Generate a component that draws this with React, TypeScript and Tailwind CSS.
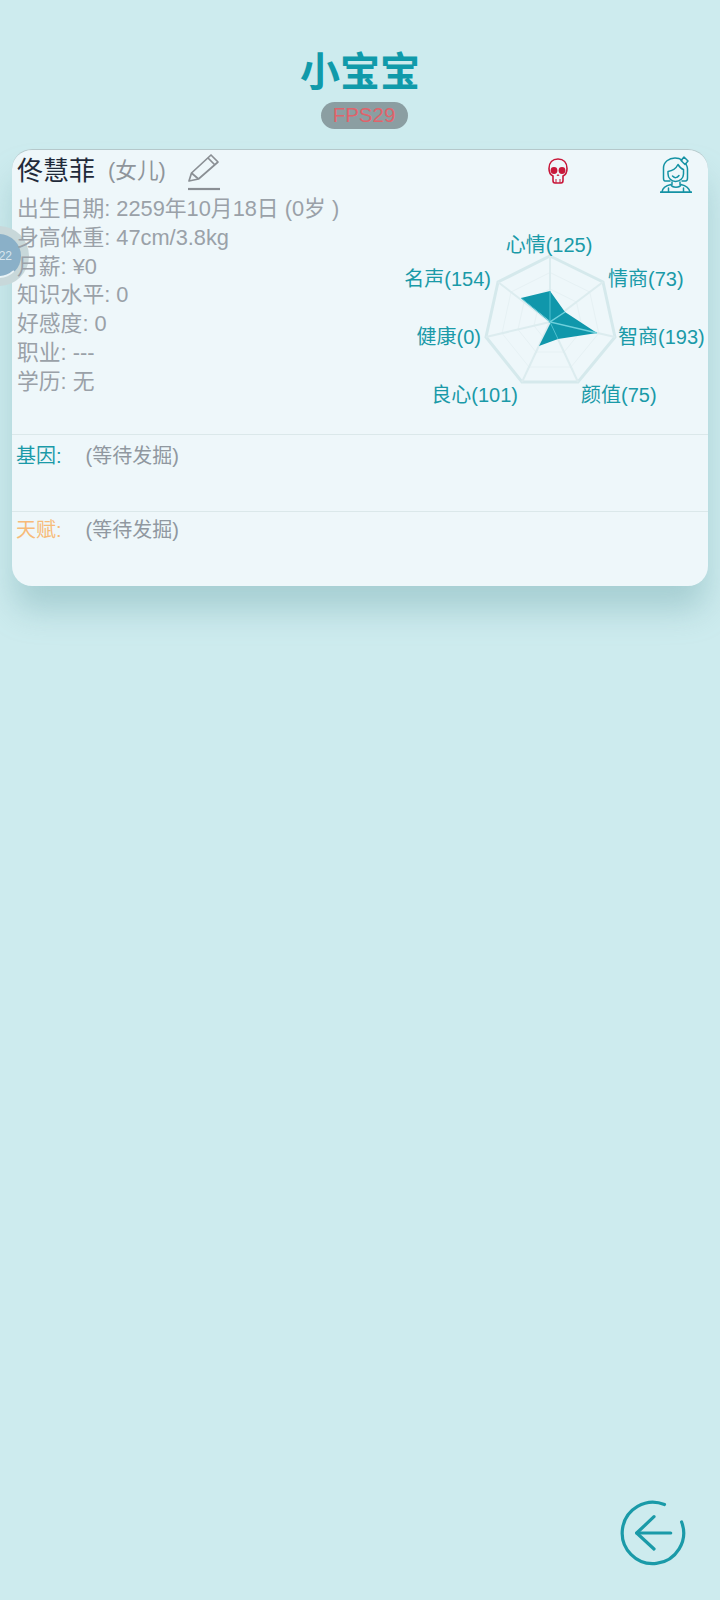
import React from "react";

const info = [
  "出生日期: 2259年10月18日 (0岁 )",
  "身高体重: 47cm/3.8kg",
  "月薪: ¥0",
  "知识水平: 0",
  "好感度: 0",
  "职业: ---",
  "学历: 无",
];

// radar center sits at 100,100 inside the svg box
const outer = [
  [100, 34],
  [153, 60],
  [165, 115],
  [128, 160],
  [72, 160],
  [36, 115],
  [48, 60],
];
const shape = "100,69 115,90 147,111 108,117 89,124 101,100 71,76";

const labels = [
  { t: "心情(125)", x: 99, y: 30, a: "middle" },
  { t: "情商(73)", x: 158, y: 64, a: "start" },
  { t: "智商(193)", x: 168, y: 122, a: "start" },
  { t: "颜值(75)", x: 131, y: 180, a: "start" },
  { t: "良心(101)", x: 68, y: 180, a: "end" },
  { t: "健康(0)", x: 31, y: 122, a: "end" },
  { t: "名声(154)", x: 41, y: 64, a: "end" },
];

function ring(scale: number) {
  return outer
    .map(([x, y]) => `${100 + (x - 100) * scale},${100 + (y - 100) * scale}`)
    .join(" ");
}

function Radar() {
  return (
    <svg width="320" height="200" viewBox="-62 0 320 200" className="block">
      <polygon points={ring(1)} fill="none" stroke="#d5e9ec" strokeWidth="3" />
      <polygon points={ring(0.75)} fill="none" stroke="#e6f1f4" strokeWidth="1" />
      <polygon points={ring(0.5)} fill="none" stroke="#e6f1f4" strokeWidth="1" />
      <polygon points={ring(0.25)} fill="none" stroke="#e6f1f4" strokeWidth="1" />
      {outer.map(([x, y], i) => (
        <line key={i} x1="100" y1="100" x2={x} y2={y} stroke="#dcecef" strokeWidth="2" />
      ))}
      <polygon points={shape} fill="#1097ab" />
      <polyline points="100,69 100,100" stroke="#4fc0cf" strokeWidth="1" />
      <polyline points="147,111 100,100 115,90" fill="none" stroke="#6fd0dc" strokeWidth="1.500" />
      <polyline points="108,117 100,100 71,76" fill="none" stroke="#4fc0cf" strokeWidth="1" />
      {labels.map((l) => (
        <text
          key={l.t}
          x={l.x}
          y={l.y}
          textAnchor={l.a as "start" | "middle" | "end"}
          fontSize="20"
          fill="#1a9aa8"
        >
          {l.t}
        </text>
      ))}
    </svg>
  );
}

function Pencil() {
  return (
    <svg width="34" height="38" viewBox="0 0 34 38" fill="none" stroke="#8a8f94" strokeWidth="1.700" strokeLinejoin="round">
      <path d="M2 28 L4.500 20 L24 2 L31 9 L11.500 26 Z" />
      <path d="M21 5 L28 12" />
      <path d="M4.500 20 L11.500 26" />
      <path d="M1 36 H33" strokeWidth="2.200" />
    </svg>
  );
}

function Skull() {
  return (
    <svg width="20" height="26" viewBox="0 0 20 26" fill="none" stroke="#c8183a" strokeWidth="1.600">
      <path d="M10 1 C4.500 1 1 4.500 1 10.500 C1 14.500 2.500 17 5 18 L5 22.500 Q5 25 7 25 H13 Q15 25 15 22.500 L15 18 C17.500 17 19 14.500 19 10.500 C19 4.500 15.500 1 10 1 Z" />
      <circle cx="6" cy="12.500" r="3.400" fill="#c8183a" stroke="none" />
      <circle cx="14" cy="12.500" r="3.400" fill="#c8183a" stroke="none" />
      <path d="M9 18 L10 16.500 L11 18" strokeWidth="1" />
      <path d="M8 21 V25 M12 21 V25" strokeWidth="1" />
    </svg>
  );
}

function Girl() {
  return (
    <svg width="32" height="37" viewBox="0 0 32 37" fill="none" stroke="#1492a4" strokeWidth="1.500" strokeLinejoin="round" strokeLinecap="round">
      <path d="M5 25 C4 25 3.500 24 3.500 22 L3.500 12 C3.500 6 9 2 15 2 C18 2 20 2.500 22 4 M26 8 C27 10 27.500 11 27.500 13 L27.500 22 C27.500 24 27 25 25.500 25 L22 25 M10 25 L5 25" />
      <path d="M8 15.500 C12 15 16 12.500 18 8.500 C19.500 11 21.500 13 23.500 13.500 L23.500 18 C23.500 22 20 25.500 15.500 25.500 C11.500 25.500 8 22 8 18 Z" />
      <path d="M21 4.500 L24 1 L28 5 L25 8.500 Z" />
      <path d="M12.500 20 Q16 23.500 19 19.500" />
      <path d="M12 26 V28.500 M20 26 V28.500" />
      <path d="M2 36 C2.500 31.500 6 29.500 11 28.500 C12 32 20 32 21 28.500 C25.500 29.500 29 31.500 30 36" />
      <path d="M8.500 36 V32 M23.500 36 V32" />
      <path d="M0.500 36.200 H31.500" strokeWidth="1.800" />
    </svg>
  );
}

function BackIcon() {
  return (
    <svg width="70" height="70" viewBox="0 0 70 70" fill="none" stroke="#1a9aa8" strokeWidth="3.200" strokeLinecap="round" strokeLinejoin="round">
      <path d="M46.500 6.500 A30.700 30.700 0 1 0 63.600 24" />
      <path d="M18.700 35 H52.700" />
      <path d="M36 18.700 L18.700 35 L36 51" />
    </svg>
  );
}

export default function App() {
  return (
    <div
      className="relative h-[1600px] w-[720px] overflow-hidden bg-[#cdebee]"
      style={{ fontFamily: '"Liberation Sans", "Noto Sans CJK SC", sans-serif' }}
    >
      <div className="flex flex-col items-center pt-[47px]">
        <h1 className="text-[40px] leading-[50px] font-bold text-[#109aaa]">小宝宝</h1>
        <div className="mt-[5px] ml-[8px] flex h-[27px] w-[87px] items-center justify-center rounded-full bg-[#8b9ea2] text-[20.500px] leading-none text-[#e0636b]">
          FPS29
        </div>
      </div>

      <div className="mx-[12px] mt-[20px] h-[437px] w-[696px] rounded-[20px] border-t border-[#b5c8cb] bg-[#eef7fa] shadow-[0_26px_32px_-2px_rgba(110,165,170,0.4)]">
        <div className="flex h-[284px] justify-between">
          <div className="pl-[5px]">
            <div className="flex h-[42px] items-center">
              <span className="text-[26px] text-[#1f2a3a]">佟慧菲</span>
              <span className="ml-[13px] text-[21.700px] text-[#8f959b]">(女儿)</span>
              <span className="mt-[1px] ml-[21px]">
                <Pencil />
              </span>
            </div>
            <ul className="relative z-10 mt-[3px] text-[21.800px] leading-[28.800px] text-[#9aa1a8]">
              {info.map((row) => (
                <li key={row}>{row}</li>
              ))}
            </ul>
          </div>
          <div className="flex flex-col items-end pt-[6px] pr-[16px]">
            <div className="flex items-start">
              <span className="mt-[2px] mr-[92px]">
                <Skull />
              </span>
              <Girl />
            </div>
            <div className="mt-[29px] -mr-[16px]">
              <Radar />
            </div>
          </div>
        </div>

        <div className="flex h-[77px] gap-[24px] border-t border-[#dbe8ea] pt-[6px] pl-[4px] text-[20px] leading-[30px]">
          <span className="text-[#1a9aa8]">基因:</span>
          <span className="text-[#9098a0]">(等待发掘)</span>
        </div>
        <div className="flex gap-[24px] border-t border-[#dbe8ea] pt-[3px] pl-[4px] text-[20px] leading-[30px]">
          <span className="text-[#f7bb78]">天赋:</span>
          <span className="text-[#9098a0]">(等待发掘)</span>
        </div>
      </div>

      {/* floating ball on the left edge */}
      <div className="absolute top-[226px] -left-[31px] flex h-[60px] w-[60px] items-center justify-center rounded-full bg-[#c8d8da]">
        <div className="flex h-[44px] w-[44px] items-center justify-end rounded-full border-2 border-transparent border-b-[#e8f3f6] bg-[#8ab0c8] pr-[7px] text-[12px] text-[#d8e6ee]">
          22
        </div>
      </div>

      <button className="absolute top-[1498px] left-[618px]">
        <BackIcon />
      </button>
    </div>
  );
}
